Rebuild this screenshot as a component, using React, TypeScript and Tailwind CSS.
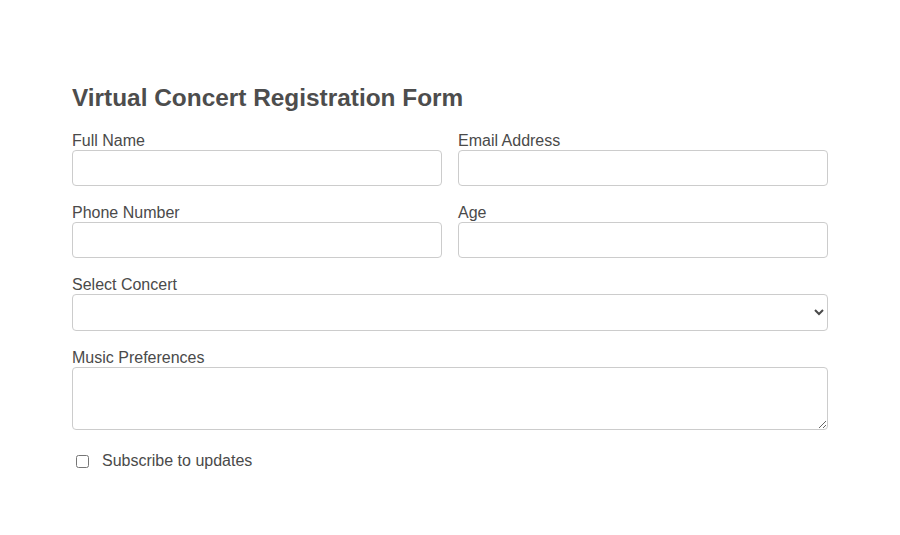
export default function App() {
  return (
    <div className="min-h-[535px] bg-white font-['Liberation_Sans',Arial,sans-serif] text-[#4a4a4a]">
      <form className="mx-auto w-[756px] pt-[83px]">
        <h1 className="mb-[19px] text-[24.4px] leading-[29px] font-bold text-[#4d4d4d]">
          Virtual Concert Registration Form
        </h1>
        <div className="grid grid-cols-2 gap-x-4">
          <Field label="Full Name" />
          <Field label="Email Address" type="email" />
          <Field label="Phone Number" type="tel" />
          <Field label="Age" type="number" />
        </div>
        <div className="mb-[17px]">
          <label className="block text-[16px] leading-[19px]">Select Concert</label>
          <select className="block h-[37px] w-full rounded border border-[#ccc] bg-white px-2 text-[16px]">
            <option value=""></option>
          </select>
        </div>
        <div className="mb-[16px]">
          <label className="block text-[16px] leading-[19px]">Music Preferences</label>
          <textarea className="block h-[63px] w-full rounded border border-[#ccc] px-2 text-[16px]" />
        </div>
        <label className="flex items-center h-[30px] text-[16px]">
          <input type="checkbox" className="ml-1 mr-[13px] h-[13px] w-[13px]" />
          Subscribe to updates
        </label>
      </form>
    </div>
  );
}

function Field({ label, type = "text" }: { label: string; type?: string }) {
  return (
    <div className="mb-[17px]">
      <label className="block text-[16px] leading-[19px]">{label}</label>
      <input
        type={type}
        className="block h-[36px] w-full rounded border border-[#ccc] px-2 text-[16px]"
      />
    </div>
  );
}
